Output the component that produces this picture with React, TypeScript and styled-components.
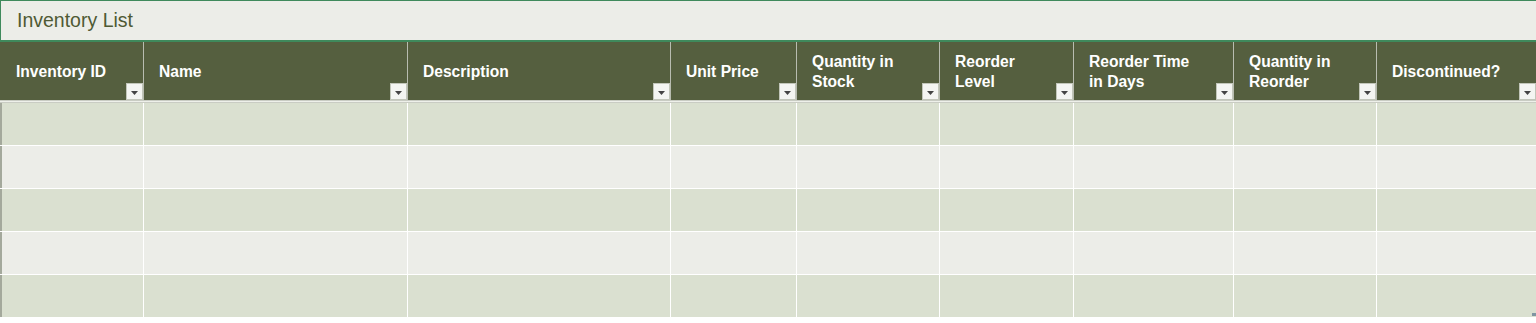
import React from 'react';
import styled, { createGlobalStyle } from 'styled-components';

const GlobalStyle = createGlobalStyle`
  html, body {
    margin: 0;
    padding: 0;
    background: #ffffff;
    font-family: "Liberation Sans", Arial, sans-serif;
  }
`;

interface Column {
  key: string;
  label: string[];
  width: number;
}

const columns: Column[] = [
  { key: 'id', label: ['Inventory ID'], width: 143 },
  { key: 'name', label: ['Name'], width: 264 },
  { key: 'desc', label: ['Description'], width: 263 },
  { key: 'price', label: ['Unit Price'], width: 126 },
  { key: 'stock', label: ['Quantity in', 'Stock'], width: 143 },
  { key: 'level', label: ['Reorder', 'Level'], width: 134 },
  { key: 'days', label: ['Reorder Time', 'in Days'], width: 160 },
  { key: 'reorder', label: ['Quantity in', 'Reorder'], width: 143 },
  { key: 'disc', label: ['Discontinued?'], width: 160 },
];

const gridTemplate = columns.map(c => `${c.width}px`).join(' ');

const rows = [0, 1, 2, 3, 4];

const App: React.FC = () => {
  return (
    <>
      <GlobalStyle />
      <Sheet>
        <TitleBar>Inventory List</TitleBar>
        <Table>
          <HeaderRow>
            {columns.map((col, i) => (
              <HeaderCell key={col.key} first={i === 0}>
                <HeaderLabel>
                  {col.label.map(line => (
                    <span key={line}>{line}</span>
                  ))}
                </HeaderLabel>
                <FilterButton>
                  <svg width="7" height="4" viewBox="0 0 7 4">
                    <path d="M0 0 L7 0 L3.5 4 Z" fill="#444" />
                  </svg>
                </FilterButton>
              </HeaderCell>
            ))}
          </HeaderRow>
          <HeaderRule />
          {rows.map(r => (
            <BodyRow key={r} shaded={r % 2 === 0}>
              {columns.map((col, i) => (
                <BodyCell key={col.key} first={i === 0} />
              ))}
            </BodyRow>
          ))}
          <ResizeGrip />
        </Table>
      </Sheet>
    </>
  );
};

const Sheet = styled.div`
  width: 1536px;
  display: flex;
  flex-direction: column;
`;

const TitleBar = styled.div`
  height: 42px;
  box-sizing: border-box;
  border-top: 1px solid #3f8a5c;
  border-left: 1px solid #3f8a5c;
  border-bottom: 2px solid #3f8a5c;
  background: #ecede8;
  color: #4f5a34;
  font-size: 19.5px;
  line-height: 39px;
  padding-left: 16px;
`;

const Table = styled.div`
  position: relative;
  display: flex;
  flex-direction: column;
`;

const HeaderRow = styled.div`
  display: grid;
  grid-template-columns: ${gridTemplate};
  height: 58px;
  background: #555f3f;
`;

const HeaderCell = styled.div<{ first?: boolean }>`
  position: relative;
  display: flex;
  align-items: center;
  box-sizing: border-box;
  padding-left: ${p => (p.first ? 16 : 15)}px;
  border-left: ${p => (p.first ? 'none' : '1px solid #b8bcb0')};
`;

const HeaderLabel = styled.div`
  display: flex;
  flex-direction: column;
  color: #ffffff;
  font-weight: bold;
  font-size: 15.6px;
  line-height: 20px;
  margin-top: 2px;
`;

const FilterButton = styled.div`
  position: absolute;
  right: 0;
  bottom: 0;
  width: 17px;
  height: 17px;
  box-sizing: border-box;
  background: #f4f5f2;
  border: 1px solid #c2c6ba;
  display: flex;
  align-items: center;
  justify-content: center;
  padding-top: 2px;
`;

const HeaderRule = styled.div`
  height: 3px;
  box-sizing: border-box;
  border-top: 1px solid #c9ccc3;
  border-bottom: 1px solid #c9ccc3;
  background: #eef0ea;
`;

const BodyRow = styled.div<{ shaded: boolean }>`
  display: grid;
  grid-template-columns: ${gridTemplate};
  height: 43px;
  box-sizing: border-box;
  border-bottom: 1px solid #ffffff;
  background: ${p => (p.shaded ? '#dae0d0' : '#ecede8')};
`;

const BodyCell = styled.div<{ first?: boolean }>`
  box-sizing: border-box;
  border-left: ${p => (p.first ? '2px solid #a4a99c' : '1px solid #ffffff')};
`;

const ResizeGrip = styled.div`
  position: absolute;
  right: 0;
  bottom: 2px;
  width: 4px;
  height: 3px;
  background: #7f95a2;
`;

export default App;
